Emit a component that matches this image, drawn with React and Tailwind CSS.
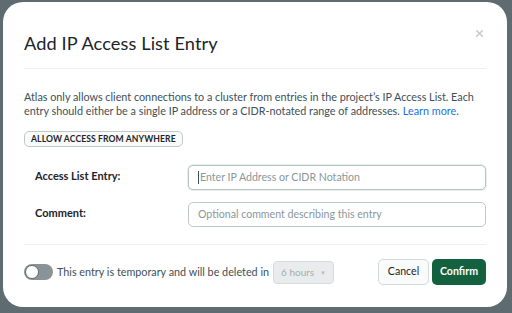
import { X } from "lucide-react";

const App = () => {
    return (
        <div
            className="h-[313px] w-[512px] overflow-hidden bg-[#5e6b71] pl-[3px] pt-[2px]"
            style={{ fontFamily: "Lato, 'Open Sans', sans-serif" }}
        >
            <div className="flex h-[305px] w-[504px] flex-col rounded-[20px] bg-white px-[21px] text-[#21313c]">
                <div className="relative flex h-[67px] items-center border-b border-[#eef0f0] pt-[18px]">
                    <h1 className="text-[18.2px] font-normal tracking-[0.1px] text-[#1c2429]">
                        Add IP Access List Entry
                    </h1>
                    <X className="absolute right-[1px] top-[26px] h-[11px] w-[11px] text-[#c9cccd]" strokeWidth={3.5} />
                </div>

                <div className="mt-[21px] whitespace-nowrap text-[10.8px] leading-[14px] text-[#3d4f58]">
                    <p>
                        Atlas only allows client connections to a cluster from entries in the project’s IP Access List. Each
                    </p>
                    <p className="flex">
                        <span>entry should either be a single IP address or a CIDR-notated range of addresses.</span>
                        <span className="ml-[3px] text-[#1a6fe3]">Learn more</span>
                        <span>.</span>
                    </p>
                </div>

                <div className="mt-[6px]">
                    <button className="h-[16px] rounded-[5px] border border-[#c1c7c9] bg-[#f9fbfa] px-[6px] text-[8.6px] font-bold leading-none tracking-[0.1px] text-[#1c2429]">
                        ALLOW ACCESS FROM ANYWHERE
                    </button>
                </div>

                <div className="mt-[17px] grid grid-cols-[164px_1fr] items-start gap-y-[12px]">
                    <label className="pl-[11px] pt-[3px] text-[11px] font-bold text-[#1c2429]">
                        Access List Entry:
                    </label>
                    <div className="flex h-[25px] items-center rounded-[5px] border border-[#b8c4c2] bg-white px-[9px] shadow-[0_0_0_1px_#e7eeec]">
                        <span className="mr-[1px] h-[13px] w-px bg-[#3d4f58]" />
                        <span className="text-[10.6px] text-[#89979b]">Enter IP Address or CIDR Notation</span>
                    </div>

                    <label className="pl-[11px] pt-[3px] text-[11px] font-bold text-[#1c2429]">
                        Comment:
                    </label>
                    <div className="flex h-[25px] items-center rounded-[5px] border border-[#c1c7c9] bg-white px-[9px]">
                        <span className="text-[10.6px] text-[#89979b]">Optional comment describing this entry</span>
                    </div>
                </div>

                <div className="mt-[17px] border-t border-[#eef0f0]" />

                <div className="mt-[14px] flex items-center">
                    <div className="flex h-[16px] w-[29px] items-center rounded-full bg-[#8a9396] pl-[1px]">
                        <span className="h-[14px] w-[14px] rounded-full border border-[#5c6c75] bg-white" />
                    </div>
                    <span className="ml-[4px] text-[10.8px] text-[#3d4f58]">
                        This entry is temporary and will be deleted in
                    </span>
                    <div className="ml-[4px] flex h-[23px] w-[61px] items-center justify-between rounded-[4px] border border-[#d6dcdc] bg-[#e9ecec] px-[7px]">
                        <span className="text-[10px] text-[#a5acae]">6 hours</span>
                        <span className="text-[6px] text-[#b6bcbe]">▼</span>
                    </div>
                    <div className="ml-auto flex gap-[3px]">
                        <button className="h-[26px] w-[51px] rounded-[5px] border border-[#d4d9d9] bg-[#f9fbfa] text-[10.6px] text-[#1c2429]">
                            Cancel
                        </button>
                        <button className="h-[26px] w-[54px] rounded-[5px] bg-[#13613e] text-[10.6px] font-bold text-white">
                            Confirm
                        </button>
                    </div>
                </div>
            </div>
        </div>
    );
};

export default App;
